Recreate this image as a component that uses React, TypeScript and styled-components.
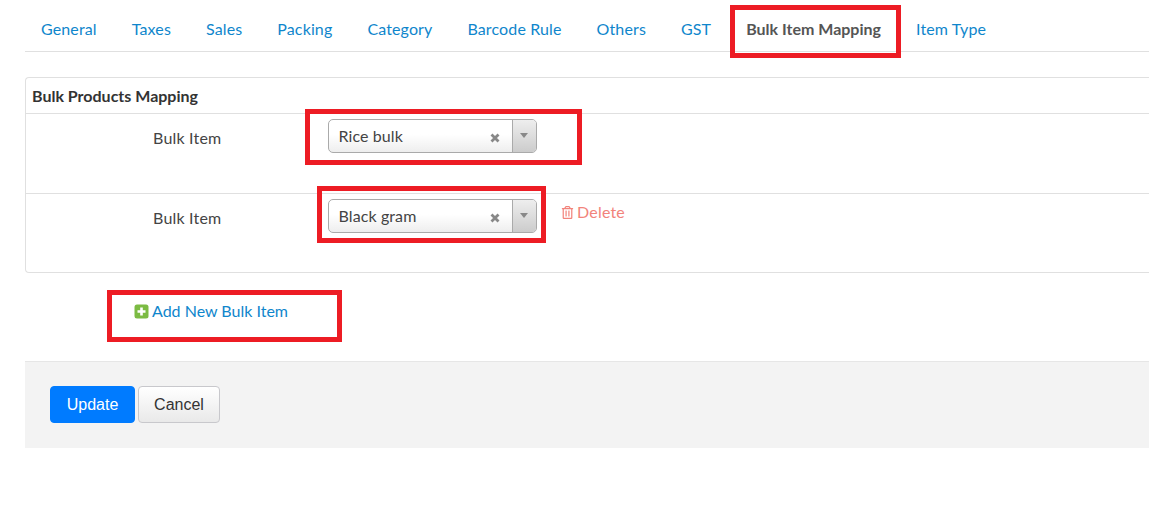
import React from "react";
import styled, { createGlobalStyle } from "styled-components";
import { FaRegTrashAlt } from "react-icons/fa";

const Global = createGlobalStyle`
  html, body { margin: 0; padding: 0; background: #fff; }
  body { font-family: Lato, "Liberation Sans", sans-serif; font-size: 16px; color: #444; overflow: hidden; }
`;

const Page = styled.div`
  position: relative;
  width: 1149px;
  height: 524px;
  padding-left: 25px;
  box-sizing: border-box;
  overflow: hidden;
`;

const Tabs = styled.nav`
  display: flex;
  height: 52px;
  box-sizing: border-box;
  border-bottom: 1px solid #e0e0e0;
  padding: 20px 0 0 16px;
  gap: 35px;
`;

const Tab = styled.a<{ $active?: boolean }>`
  font-size: 16px;
  line-height: 18px;
  color: ${(p) => (p.$active ? "#555" : "#0f86cc")};
  font-weight: ${(p) => (p.$active ? 700 : 400)};
  letter-spacing: ${(p) => (p.$active ? 0 : 0.13)}px;
  white-space: nowrap;
`;

const Panel = styled.section`
  margin-top: 25px;
  height: 196px;
  box-sizing: border-box;
  border: 1px solid #e0e0e0;
  border-right: 0;
  border-radius: 4px 0 0 4px;
`;

const PanelTitle = styled.h3`
  margin: 0;
  height: 36px;
  box-sizing: border-box;
  padding: 9px 0 0 6px;
  font-size: 16px;
  line-height: 18px;
  font-weight: 700;
  color: #333;
  border-bottom: 1px solid #e0e0e0;
`;

const Row = styled.div<{ $last?: boolean; $top: number }>`
  display: flex;
  align-items: flex-start;
  height: ${(p) => (p.$last ? 78 : 80)}px;
  box-sizing: border-box;
  padding-top: ${(p) => p.$top}px;
  border-bottom: ${(p) => (p.$last ? "0" : "1px solid #e0e0e0")};
`;

const Label = styled.label`
  width: 175px;
  margin-left: 127px;
  margin-top: 10px;
  font-size: 16px;
  line-height: 18px;
  letter-spacing: 0.2px;
  color: #444;
`;

const Select = styled.div`
  width: 209px;
  height: 34px;
  box-sizing: border-box;
  display: flex;
  border: 1px solid #aaa;
  border-radius: 5px;
  background: linear-gradient(#fff 45%, #eee);
  overflow: hidden;
`;

const SelectValue = styled.span`
  flex: 1;
  padding: 7px 0 0 9.5px;
  line-height: 18px;
  font-size: 16px;
  letter-spacing: 0.1px;
  color: #444;
`;

const Clear = styled.span`
  width: 22px;
  padding-top: 13px;
  box-sizing: border-box;
  display: block;
  & svg { display: block; }
`;

const Arrow = styled.span`
  width: 24px;
  border-left: 1px solid #aaa;
  background: linear-gradient(#eee, #ccc);
  display: flex;
  justify-content: center;
  padding: 13px 2px 0 0;
  box-sizing: border-box;
  &::after {
    content: "";
    width: 0;
    height: 0;
    border: 4px solid transparent;
    border-top: 5px solid #888;
    border-bottom: 0;
  }
`;

const DeleteLink = styled.a`
  margin: 4px 0 0 24px;
  display: flex;
  align-items: center;
  gap: 3px;
  font-size: 16px;
  line-height: 18px;
  letter-spacing: 0.2px;
  color: #f2837b;
`;

const AddRow = styled.div`
  height: 88px;
  box-sizing: border-box;
  padding: 29px 0 0 109px;
`;

const AddLink = styled.a`
  display: inline-flex;
  align-items: center;
  gap: 3px;
  font-size: 16px;
  line-height: 18px;
  color: #0f86cc;
`;

const Footer = styled.footer`
  height: 87px;
  box-sizing: border-box;
  background: #f3f3f3;
  border-top: 1px solid #e6e6e6;
  padding: 24px 0 0 25px;
  display: flex;
  gap: 3px;
  align-items: flex-start;
`;

const Button = styled.button<{ $primary?: boolean }>`
  width: ${(p) => (p.$primary ? 85 : 82)}px;
  height: 37px;
  box-sizing: border-box;
  padding: 0;
  border-radius: 4px;
  font-family: "Liberation Sans", Arial, sans-serif;
  font-size: 16px;
  color: ${(p) => (p.$primary ? "#fff" : "#333")};
  background: ${(p) => (p.$primary ? "#007bff" : "linear-gradient(#fff, #e9e9e9)")};
  border: 1px solid ${(p) => (p.$primary ? "#007bff" : "#c8c8cc")};
`;

const Callout = styled.div<{ $x: number; $y: number; $w: number; $h: number }>`
  position: absolute;
  left: ${(p) => p.$x}px;
  top: ${(p) => p.$y}px;
  width: ${(p) => p.$w}px;
  height: ${(p) => p.$h}px;
  box-sizing: border-box;
  border: 5px solid #ed1c24;
  pointer-events: none;
`;

const tabs = ["General", "Taxes", "Sales", "Packing", "Category", "Barcode Rule", "Others", "GST", "Bulk Item Mapping", "Item Type"];

const ClearIcon = () => (
  <svg width="10" height="10" viewBox="0 0 10 10">
    <path d="M1.5 1.5 L8.5 8.5 M8.5 1.5 L1.5 8.5" stroke="#888" strokeWidth="2.8" />
  </svg>
);

const BulkSelect = ({ value }: { value: string }) => (
  <Select>
    <SelectValue>{value}</SelectValue>
    <Clear><ClearIcon /></Clear>
    <Arrow />
  </Select>
);

export default function App() {
  return (
    <Page>
      <Global />
      <Tabs>
        {tabs.map((t) => (
          <Tab key={t} $active={t === "Bulk Item Mapping"}>{t}</Tab>
        ))}
      </Tabs>
      <Panel>
        <PanelTitle>Bulk Products Mapping</PanelTitle>
        <Row $top={5}>
          <Label>Bulk Item</Label>
          <BulkSelect value="Rice bulk" />
        </Row>
        <Row $last $top={5}>
          <Label>Bulk Item</Label>
          <BulkSelect value="Black gram" />
          <DeleteLink>
            <FaRegTrashAlt size={13} color="#f2837b" />
            Delete
          </DeleteLink>
        </Row>
      </Panel>
      <AddRow>
        <AddLink>
          <svg width="15" height="15" viewBox="0 0 15 15">
            <rect x="0.5" y="0.5" width="14" height="14" rx="2.5" fill="#7cbb43" />
            <path d="M7.5 3.5v8M3.5 7.5h8" stroke="#fff" strokeWidth="2.6" />
          </svg>
          Add New Bulk Item
        </AddLink>
      </AddRow>
      <Footer>
        <Button $primary>Update</Button>
        <Button>Cancel</Button>
      </Footer>
      <Callout $x={730} $y={5} $w={171} $h={53} />
      <Callout $x={305} $y={109} $w={277} $h={56} />
      <Callout $x={317} $y={186} $w={229} $h={57} />
      <Callout $x={107} $y={290} $w={235} $h={52} />
    </Page>
  );
}
